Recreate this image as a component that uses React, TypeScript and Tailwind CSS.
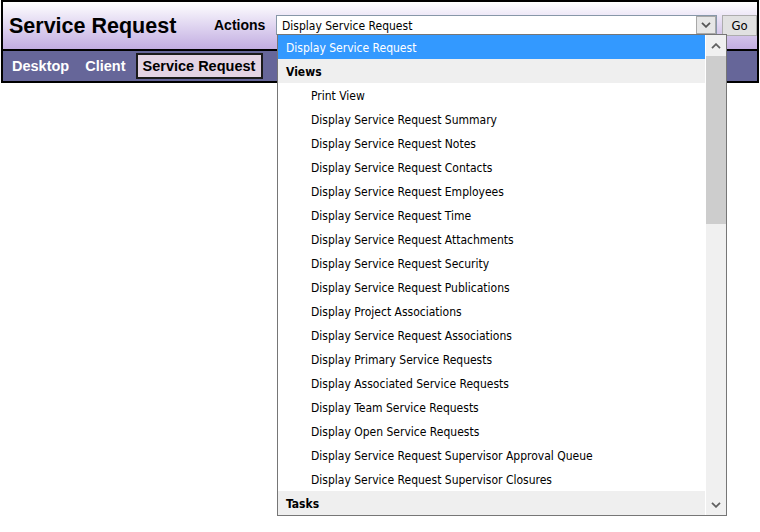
import React from "react";

const items = [
  "Print View",
  "Display Service Request Summary",
  "Display Service Request Notes",
  "Display Service Request Contacts",
  "Display Service Request Employees",
  "Display Service Request Time",
  "Display Service Request Attachments",
  "Display Service Request Security",
  "Display Service Request Publications",
  "Display Project Associations",
  "Display Service Request Associations",
  "Display Primary Service Requests",
  "Display Associated Service Requests",
  "Display Team Service Requests",
  "Display Open Service Requests",
  "Display Service Request Supervisor Approval Queue",
  "Display Service Request Supervisor Closures",
];

function Chevron({ up, color = "#606060" }: { up?: boolean; color?: string }) {
  return (
    <svg width="10" height="6" viewBox="0 0 10 6" fill="none">
      <path
        d={up ? "M1 5.2 L5 1.2 L9 5.2" : "M1 0.8 L5 4.8 L9 0.8"}
        stroke={color}
        strokeWidth="1.8"
      />
    </svg>
  );
}

export default function App() {
  return (
    <div className="relative min-h-[532px] w-[760px] bg-white font-['Liberation_Sans',Arial,sans-serif]">
      <div className="ml-[1px] w-[758px] border-2 border-black">
        {/* top section */}
        <div className="flex h-[49px] items-start whitespace-nowrap border-b-2 border-black bg-linear-to-b from-[#ffffff] to-[#c2ade1]">
          <div className="ml-[6px] mt-[11px] w-[205px] shrink-0 text-[21.5px] font-bold leading-[26px] text-black">
            Service Request
          </div>
          <div className="mt-[15px] w-[62px] shrink-0 text-[14px] font-bold leading-[16px] text-black">
            Actions
          </div>
          <div className="mt-[13px] flex h-[20px] w-[441px] shrink-0 items-center border border-[#8797a8] bg-white font-['DejaVu_Sans_Condensed','DejaVu_Sans',sans-serif] text-[12px] text-black">
            <span className="ml-[5px] flex-1 pt-[2px] leading-[18px]">Display Service Request</span>
            <div className="flex h-[18px] w-[20px] items-center justify-center border border-[#a8a8a8] bg-[#e6e6e6]">
              <Chevron color="#555555" />
            </div>
          </div>
          <div className="ml-[5px] mt-[13px] flex h-[21px] w-[35px] shrink-0 items-center justify-center border border-[#adadad] bg-[#e1e1e1] pt-[1px] font-['DejaVu_Sans_Condensed','DejaVu_Sans',sans-serif] text-[13px] text-black">
            Go
          </div>
        </div>
        {/* nav */}
        <div className="flex h-[30px] items-center whitespace-nowrap bg-[#666699] pl-[9px] text-[14.5px] font-bold leading-[16px]">
          <span className="text-white">Desktop</span>
          <span className="ml-[16px] text-white">Client</span>
          <span className="ml-[10px] flex h-[26px] items-center border-2 border-[#1a1a1a] bg-[#e4d4e4] pl-[5px] pr-[6px] text-black">
            Service Request
          </span>
        </div>
      </div>

      {/* dropdown overlay */}
      <div className="absolute left-[277px] top-[34px] flex h-[482px] w-[450px] border border-[#767676] bg-white font-['DejaVu_Sans_Condensed','DejaVu_Sans',sans-serif] text-[12px] text-black">
        <div className="flex w-[427px] flex-col whitespace-nowrap">
          <div className="flex h-[24px] items-center bg-[#3399ff] pl-[8px] pt-[2px] text-white">
            Display Service Request
          </div>
          <div className="flex h-[24px] items-center bg-[#efefef] pl-[8px] pt-[2px] font-bold">
            Views
          </div>
          {items.map((t) => (
            <div key={t} className="flex h-[24px] items-center pl-[33px] pt-[2px]">
              {t}
            </div>
          ))}
          <div className="flex h-[24px] items-center bg-[#efefef] pl-[8px] pt-[2px] font-bold">
            Tasks
          </div>
        </div>
        <div className="ml-[1px] flex w-[20px] flex-col bg-[#f0f0f0]">
          <div className="flex h-[21px] items-center justify-center">
            <Chevron up />
          </div>
          <div className="h-[168px] bg-[#cdcdcd]" />
          <div className="flex-1" />
          <div className="flex h-[21px] items-center justify-center">
            <Chevron />
          </div>
        </div>
      </div>
    </div>
  );
}
